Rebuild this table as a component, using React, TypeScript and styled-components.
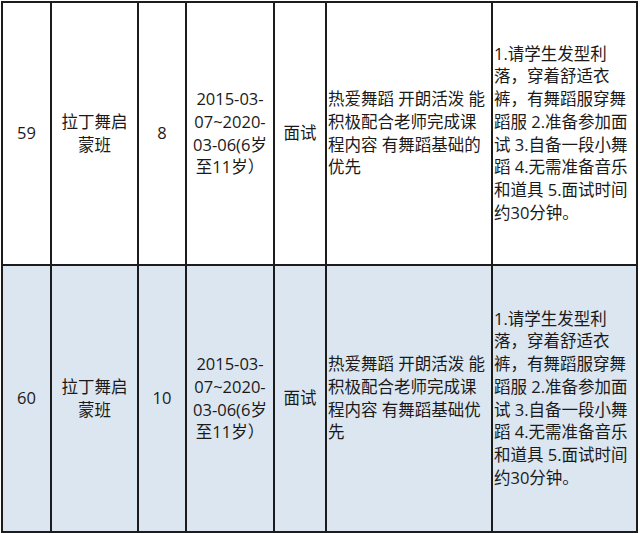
import React from 'react';
import styled, { createGlobalStyle } from 'styled-components';

const GlobalStyle = createGlobalStyle`
  html, body {
    margin: 0;
    padding: 0;
    background: #ffffff;
  }
  body {
    font-family: "Open Sans", "Noto Sans CJK SC", sans-serif;
  }
`;

type Course = {
  no: string;
  name: string[];
  seats: string;
  age: string[];
  method: string;
  demand: string[];
  notes: string[];
};

const notes = [
  '1.请学生发型利',
  '落，穿着舒适衣',
  '裤，有舞蹈服穿舞',
  '蹈服 2.准备参加面',
  '试 3.自备一段小舞',
  '蹈 4.无需准备音乐',
  '和道具 5.面试时间',
  '约30分钟。',
];

const courses: Course[] = [
  {
    no: '59',
    name: ['拉丁舞启', '蒙班'],
    seats: '8',
    age: ['2015-03-', '07~2020-', '03-06(6岁', '至11岁）'],
    method: '面试',
    demand: ['热爱舞蹈 开朗活泼 能', '积极配合老师完成课', '程内容 有舞蹈基础的', '优先'],
    notes,
  },
  {
    no: '60',
    name: ['拉丁舞启', '蒙班'],
    seats: '10',
    age: ['2015-03-', '07~2020-', '03-06(6岁', '至11岁）'],
    method: '面试',
    demand: ['热爱舞蹈 开朗活泼 能', '积极配合老师完成课', '程内容 有舞蹈基础优', '先'],
    notes,
  },
];

const Sheet = styled.div`
  margin: 1px 0 0 1px;
  width: 637px;
  box-sizing: border-box;
  border-left: 2px solid #1c1c1c;
  border-top: 2px solid #1c1c1c;
`;

const Row = styled.div<{ $height: number; $shaded?: boolean }>`
  display: grid;
  grid-template-columns: 49px 87px 48px 88px 52px 166px 145px;
  height: ${(p) => p.$height}px;
  background: ${(p) => (p.$shaded ? '#dce6f1' : '#ffffff')};
`;

const Cell = styled.div<{ $left?: boolean; $pad?: number }>`
  box-sizing: border-box;
  border-right: 2px solid #1c1c1c;
  border-bottom: 2px solid #1c1c1c;
  display: flex;
  flex-direction: column;
  justify-content: center;
  align-items: ${(p) => (p.$left ? 'flex-start' : 'center')};
  text-align: ${(p) => (p.$left ? 'left' : 'center')};
  padding-left: ${(p) => p.$pad ?? 0}px;
  color: #1a1a1a;
  font-size: 16.5px;
  line-height: 22.7px;
  overflow: hidden;
`;

const Line = styled.span`
  display: block;
  white-space: nowrap;
`;

const Lines = ({ items }: { items: string[] }) => (
  <>
    {items.map((t, i) => (
      <Line key={i}>{t}</Line>
    ))}
  </>
);

const App = () => {
  return (
    <>
      <GlobalStyle />
      <Sheet>
        {courses.map((c, i) => (
          <Row key={c.no} $height={i === 0 ? 263 : 267} $shaded={i === 1}>
            <Cell>{c.no}</Cell>
            <Cell>
              <Lines items={c.name} />
            </Cell>
            <Cell>{c.seats}</Cell>
            <Cell>
              <Lines items={c.age} />
            </Cell>
            <Cell>{c.method}</Cell>
            <Cell $left $pad={1}>
              <Lines items={c.demand} />
            </Cell>
            <Cell $left $pad={1}>
              <Lines items={c.notes} />
            </Cell>
          </Row>
        ))}
      </Sheet>
    </>
  );
};

export default App;
